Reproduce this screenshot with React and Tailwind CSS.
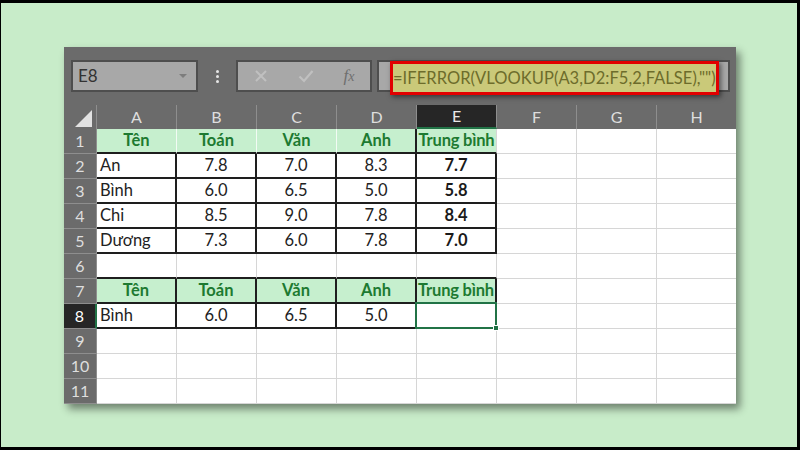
import React from "react";

const FONT = { fontFamily: "Lato, 'Noto Sans', 'Open Sans', sans-serif" };

const COLS = ["A", "B", "C", "D", "E", "F", "G", "H"];

const ROWS = [
  { n: 1, kind: "head", cells: ["Tên", "Toán", "Văn", "Anh", "Trung bình"] },
  { n: 2, kind: "data", cells: ["An", "7.8", "7.0", "8.3", "7.7"] },
  { n: 3, kind: "data", cells: ["Bình", "6.0", "6.5", "5.0", "5.8"] },
  { n: 4, kind: "data", cells: ["Chi", "8.5", "9.0", "7.8", "8.4"] },
  { n: 5, kind: "data", cells: ["Dương", "7.3", "6.0", "7.8", "7.0"] },
  { n: 6, kind: "empty", cells: [] },
  { n: 7, kind: "head", cells: ["Tên", "Toán", "Văn", "Anh", "Trung bình"] },
  { n: 8, kind: "data", cells: ["Bình", "6.0", "6.5", "5.0", ""] },
  { n: 9, kind: "empty", cells: [] },
  { n: 10, kind: "empty", cells: [] },
  { n: 11, kind: "empty", cells: [] },
];

function bottomClass(n, c) {
  const black = c <= 4 && n >= 1 && n <= 8;
  return black ? "border-b-2 border-b-[#1e1e1e]" : "border-b border-b-[#d6d6d6]";
}

function rightClass(n, c) {
  if (c <= 4 && [2, 3, 4, 5, 7, 8].includes(n)) return "border-r-2 border-r-[#1e1e1e]";
  if (n === 1 && c === 3) return "border-r-2 border-r-[#1e1e1e]";
  if (n === 1 && c < 3) return "border-r border-r-[#f2fbf4]";
  return "border-r border-r-[#d6d6d6]";
}

function Cell({ row, c }) {
  const text = row.cells[c] ?? "";
  const isHead = row.kind === "head" && c <= 4;
  const isName = row.kind === "data" && c === 0;
  const bold = row.kind === "data" && c === 4;
  const selected = row.n === 8 && c === 4;
  const bg = isHead ? "bg-[#c6efce]" : "bg-white";
  const align = isName ? "justify-start pl-[3px]" : "justify-center";
  const color = isHead ? "text-[#1d7a31] font-bold" : bold ? "text-[#1a1a1a] font-bold" : "text-[#222222]";
  return (
    <div
      className={`relative w-[80px] shrink-0 h-full flex items-center ${align} ${bg} ${bottomClass(row.n, c)} ${rightClass(row.n, c)}`}
    >
      <span className={`text-[16.5px] leading-none whitespace-nowrap ${color} ${isHead && c === 4 ? "tracking-[-0.2px]" : ""}`}>{text}</span>
      {selected && (
        <div className="absolute z-10 left-[-2px] top-[-2px] right-[-2px] bottom-[-2px] border-2 border-[#217346]">
          <div className="absolute right-[-4px] bottom-[-4px] w-[6px] h-[6px] bg-[#217346] border border-white" />
        </div>
      )}
    </div>
  );
}

export default function App() {
  return (
    <div
      className="w-[800px] h-[450px] bg-[#c8ecc9] border-t-[3px] border-l border-r-[3px] border-b-[3px] border-black overflow-hidden"
      style={FONT}
    >
      <div className="ml-[63px] mt-[44px] w-[672px] h-[357px] bg-[#6b6b6b] shadow-[4px_5px_8px_rgba(0,0,0,0.45)] overflow-hidden flex flex-col">
        {/* toolbar */}
        <div className="h-[58px] shrink-0 flex items-start pt-[13px] pl-[7px]">
          <div className="w-[127px] h-[32px] bg-[#a8a8a8] border-2 border-[#4e4e4e] flex items-center justify-between pl-[5px] pr-[8px]">
            <span className="text-[17px] text-[#333333]">E8</span>
            <svg width="10" height="6" viewBox="0 0 10 6">
              <path d="M1 1 L9 1 L5 5 Z" fill="#7d7d7d" />
            </svg>
          </div>
          <div className="w-[38px] h-[32px] flex flex-col items-center justify-center gap-[2px]">
            <div className="w-[3px] h-[3px] rounded-full bg-[#e6e6e6]" />
            <div className="w-[3px] h-[3px] rounded-full bg-[#e6e6e6]" />
            <div className="w-[3px] h-[3px] rounded-full bg-[#e6e6e6]" />
          </div>
          <div className="w-[136px] h-[32px] bg-[#a8a8a8] border-2 border-[#4e4e4e] flex items-center">
            <div className="w-[46px] flex justify-center">
              <svg width="14" height="14" viewBox="0 0 14 14">
                <path d="M2 2 L12 12 M12 2 L2 12" stroke="#c0c0c0" strokeWidth="2" />
              </svg>
            </div>
            <div className="w-[44px] flex justify-center">
              <svg width="16" height="14" viewBox="0 0 16 14">
                <path d="M1.5 7.5 L6 12 L14.5 2" stroke="#c0c0c0" strokeWidth="2.2" fill="none" />
              </svg>
            </div>
            <div className="flex-1 flex justify-center">
              <span className="text-[17px] italic text-[#6f6f6f]" style={{ fontFamily: "'Liberation Serif', serif" }}>
                f<span className="text-[14px]">x</span>
              </span>
            </div>
          </div>
          <div className="ml-[5px] w-[353px] h-[32px] bg-[#a8a8a8] border-2 border-[#4e4e4e] relative">
            <div className="absolute left-[11px] top-[-1px] w-[329px] h-[34px] border-[3px] border-[#e10000] bg-[#cac979] shadow-[2px_2px_5px_rgba(0,0,0,0.5)] flex items-center overflow-hidden">
              <span className="text-[16.5px] tracking-[0.05px] text-[#6d6c2b] whitespace-nowrap leading-none">
                =IFERROR(VLOOKUP(A3,D2:F5,2,FALSE),"")
              </span>
            </div>
          </div>
        </div>

        {/* column headers */}
        <div className="h-[24px] shrink-0 flex">
          <div className="w-[33px] shrink-0 h-full flex items-end justify-end pr-[4px] pb-[2px] border-r border-r-[#8e8e8e]">
            <svg width="17" height="17" viewBox="0 0 17 17">
              <path d="M17 0 L17 17 L0 17 Z" fill="#e2e2e2" />
            </svg>
          </div>
          {COLS.map((c) => (
            <div
              key={c}
              className={`w-[80px] shrink-0 h-full flex items-center justify-center text-[16px] ${
                c === "E"
                  ? "bg-[#262626] text-[#e8e8e8] border-b-2 border-b-[#217346] border-r border-r-[#8e8e8e]"
                  : "text-[#dedede] border-r border-r-[#8e8e8e]"
              }`}
            >
              {c}
            </div>
          ))}
        </div>

        {/* rows */}
        {ROWS.map((row) => (
          <div key={row.n} className="h-[25px] shrink-0 flex">
            <div
              className={`w-[33px] shrink-0 h-full flex items-center justify-center text-[16px] border-b border-b-[#8e8e8e] ${
                row.n === 8
                  ? "bg-[#262626] text-white border-r-2 border-r-[#217346]"
                  : "text-[#dedede] border-r border-r-[#8e8e8e]"
              }`}
            >
              {row.n}
            </div>
            {COLS.map((_, c) => (
              <Cell key={c} row={row} c={c} />
            ))}
          </div>
        ))}
      </div>
    </div>
  );
}
